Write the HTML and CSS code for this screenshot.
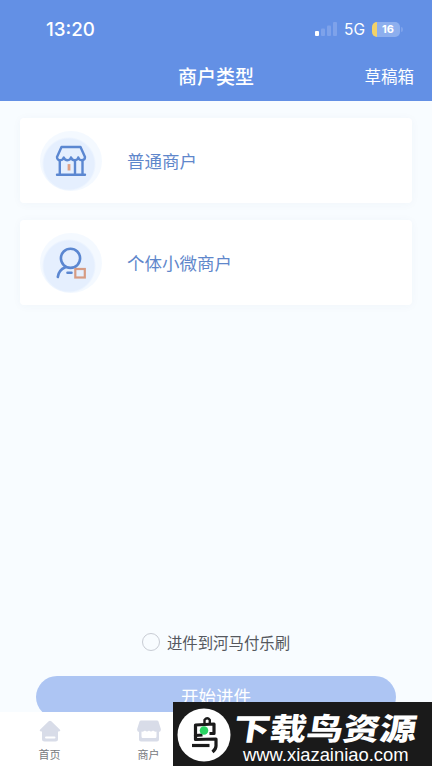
FILE: index.html
```html
<!DOCTYPE html>
<html lang="zh-CN">
  <head>
    <meta charset="UTF-8" />
    <meta name="viewport" content="width=device-width, initial-scale=1.0" />
    <title>商户类型</title>
    <link rel="stylesheet" href="styles.css">
  </head>
  <body>
    <header>
      <div class="status">
        <span class="time">13:20</span>
        <div class="status-right">
          <svg class="signal" width="22" height="14" viewBox="0 0 22 14">
            <rect x="0" y="9" width="4" height="5" rx="1" fill="#fff" />
            <rect x="6" y="6.500" width="4" height="7.500" rx="1" fill="#7ea2ea" />
            <rect x="12" y="3.500" width="4" height="10.500" rx="1" fill="#7ea2ea" />
            <rect x="18" y="0" width="4" height="14" rx="1" fill="#7ea2ea" />
          </svg>
          <span class="network">5G</span>
          <span class="battery">16</span>
        </div>
      </div>
      <nav class="navbar">
        <h1>商户类型</h1>
        <a class="drafts">草稿箱</a>
      </nav>
    </header>

    <main>
      <section class="cards">
        <article class="card">
          <div class="icon">
            <svg width="32" height="32" viewBox="0 0 32 32" fill="none" stroke="#5b87d1" stroke-width="2.400" stroke-linecap="round" stroke-linejoin="round">
              <path d="M6.500 2h19l4.500 10c0 2-1 3.200-3.200 3.200s-3-1-3.500-2.700c-.5 1.700-1.700 2.700-3.700 2.700s-3-1-3.600-2.700c-.5 1.700-1.700 2.700-3.600 2.700s-3-1-3.700-2.700c-.5 1.700-1.500 2.700-3.500 2.700s-3.200-1.200-3.200-3.200z" />
              <path d="M4.800 15.500v14M27.500 15.500v14M20 15.500v14M2 29.800h28" />
              <path d="M14 20.500v3.600" stroke="#e0a084" stroke-width="2.800" stroke-linecap="square" />
            </svg>
          </div>
          <h2>普通商户</h2>
        </article>
        <article class="card">
          <div class="icon">
            <svg width="32" height="32" viewBox="0 0 32 32" fill="none" stroke="#5b87d1" stroke-width="2.600" stroke-linecap="round">
              <circle cx="15.500" cy="11.300" r="9.600" />
              <path d="M2.800 30c.5-4.800 3.200-8 7.500-9.800M12.500 25.800h4" />
              <rect x="20.300" y="22" width="9.500" height="8.500" stroke="#d69b83" stroke-width="2.200" />
            </svg>
          </div>
          <h2>个体小微商户</h2>
        </article>
      </section>

      <section class="submit">
        <label class="agree"><span class="radio"></span>进件到河马付乐刷</label>
        <button>开始进件</button>
      </section>
    </main>

    <footer class="tabbar">
      <a class="tab">
        <svg width="22" height="22" viewBox="0 0 22 22">
          <path d="M9.700 1.200q1.300-1.100 2.600 0l8.500 8.300q1.300 1.700-.8 2H19v7.500q0 2.500-2.500 2.500h-11Q3 21.500 3 19v-7.500H2q-2.100-.3-.8-2z" fill="#d8dce8" />
          <rect x="6" y="16.500" width="10.500" height="2" rx="1" fill="#fff" />
        </svg>
        <span>首页</span>
      </a>
      <a class="tab">
        <svg width="24" height="22" viewBox="0 0 24 22">
          <path d="M4 .5h16q1 0 1.500 1l2.200 7q.8 3-1.700 3.500v7.500q0 2-2 2H4q-2 0-2-2V12Q-.5 11.500.3 8.500l2.200-7Q3 .5 4 .5z" fill="#d8dce8" />
          <path d="M4.500 11.500q2 .5 3.500-1 2 2 4 0 2 2 4 0 1.500 1.500 3.500 1v5q0 2-2 1.500h-11q-2 .5-2-1.500z" fill="#fff" />
        </svg>
        <span>商户</span>
      </a>
    </footer>

    <aside class="site-mark">
      <svg width="54" height="54" viewBox="0 0 54 54">
        <circle cx="27" cy="27" r="26.500" fill="#fff" />
        <g fill="none" stroke="#1a1a1a" stroke-width="3.200" stroke-linejoin="round">
          <path d="M27.500 16v-4q2.800-3.500 5.300 0v3" stroke-width="2.400" />
          <path d="M25.500 27L18.500 27.500V17l18.500-1v9.500h-4.500" />
          <path d="M18.500 27v4.500l20.500-.5v7q0 3-3.500 6" />
          <path d="M15 37.500h17.500" />
        </g>
        <circle cx="27" cy="22.500" r="4.300" fill="#2bd463" />
      </svg>
      <div class="site-text">
        <strong>下载鸟资源</strong>
        <span>www.xiazainiao.com</span>
      </div>
    </aside>
  </body>
</html>
```

FILE: styles.css
```css
* {
  margin: 0px;
  box-sizing: border-box;
}

body {
  position: relative;
  display: flex;
  flex-direction: column;
  height: 768px;
  overflow: hidden;
  background-color: #f8fcff;
  font-family: "Noto Sans CJK SC", sans-serif;
}

header {
  flex: none;
  height: 101px;
  background-color: #6390e5;
  color: white;
}

.status {
  display: flex;
  justify-content: space-between;
  align-items: center;
  height: 58px;
  padding: 0px 29px 0px 46px;
  font-family: Inter, sans-serif;
}

.time {
  font-size: 18.8px;
  font-weight: 500;
}

.status-right {
  display: flex;
  align-items: center;
}

.signal {
  margin-right: 7px;
}

.network {
  margin-right: 7px;
  font-size: 15.5px;
}

.battery {
  position: relative;
  width: 28px;
  height: 15px;
  padding-left: 4px;
  border-radius: 5px;
  background: linear-gradient(to right, #f3d268 5px, #8dafee 5px);
  font-size: 11px;
  font-weight: 700;
  line-height: 15px;
  text-align: center;
  margin-right: 3px;
}

.battery::after {
  content: "";
  position: absolute;
  right: -3px;
  top: 5px;
  width: 2px;
  height: 5px;
  border-radius: 0px 2px 2px 0px;
  background-color: #7ea2ea;
}

.navbar {
  display: grid;
  grid-template-columns: 1fr auto 1fr;
  align-items: center;
  height: 36px;
  padding: 0px 18px;
}

.navbar h1 {
  grid-column: 2;
  font-size: 19px;
  font-weight: 500;
  line-height: 36px;
}

.drafts {
  justify-self: end;
  font-size: 16.5px;
}

main {
  flex: 1;
  min-height: 0px;
  display: flex;
  flex-direction: column;
  justify-content: space-between;
  overflow: hidden;
}

.cards {
  display: grid;
  gap: 17px;
  padding: 17px 20px;
}

.card {
  display: flex;
  align-items: center;
  height: 85px;
  padding-left: 20px;
  border-radius: 4px;
  background-color: white;
  box-shadow: 0px 1px 10px rgba(60, 80, 120, 0.04);
}

.icon {
  display: flex;
  justify-content: center;
  align-items: center;
  width: 62px;
  height: 60px;
  margin-right: 25px;
  border-radius: 50%;
  background: radial-gradient(circle at 29px 33px, #e5effe 25px, #f4f9ff 27px);
}

.card h2 {
  color: #5f87cb;
  font-size: 17.5px;
  font-weight: 400;
}

.submit {
  display: flex;
  flex-direction: column;
  flex: none;
  height: 82px;
  padding: 0px 36px;
}

.agree {
  display: flex;
  justify-content: center;
  align-items: center;
  flex: none;
  height: 24px;
  margin-bottom: 22px;
  color: #55585e;
  font-size: 15.4px;
  line-height: 22px;
}

.radio {
  width: 18px;
  height: 18px;
  margin-right: 7px;
  border: 1px solid #c8ccd4;
  border-radius: 50%;
}

button {
  flex: none;
  height: 42px;
  padding: 0px 0px 4px;
  border: none;
  border-radius: 21px;
  background-color: #adc5f3;
  color: white;
  font-family: inherit;
  font-size: 17.5px;
}

.tabbar {
  display: flex;
  flex: none;
  height: 56px;
  background-color: white;
}

.tab {
  display: flex;
  flex-direction: column;
  align-items: center;
  width: 99px;
  padding-top: 8px;
  color: #777a80;
  font-size: 11px;
  line-height: 16px;
}

.tab svg {
  margin-bottom: 4px;
}

/* laid over the tab bar and the button */
.site-mark {
  position: absolute;
  right: 0px;
  bottom: 2px;
  display: flex;
  width: 259px;
  height: 64px;
  padding: 6px 0px 0px 4px;
  background-color: #1a1a1a;
  color: white;
}

.site-text {
  display: flex;
  flex-direction: column;
  align-items: flex-start;
  padding-left: 1px;
}

.site-text strong {
  height: 36px;
  font-size: 30.5px;
  font-weight: 900;
  line-height: 39px;
  white-space: nowrap;
  transform: scaleX(1.2) skewX(-7deg);
  transform-origin: 0px 32px;
}

.site-text span {
  padding-left: 11px;
  font-family: "Liberation Sans", sans-serif;
  font-size: 18.4px;
  line-height: 21px;
}
```
